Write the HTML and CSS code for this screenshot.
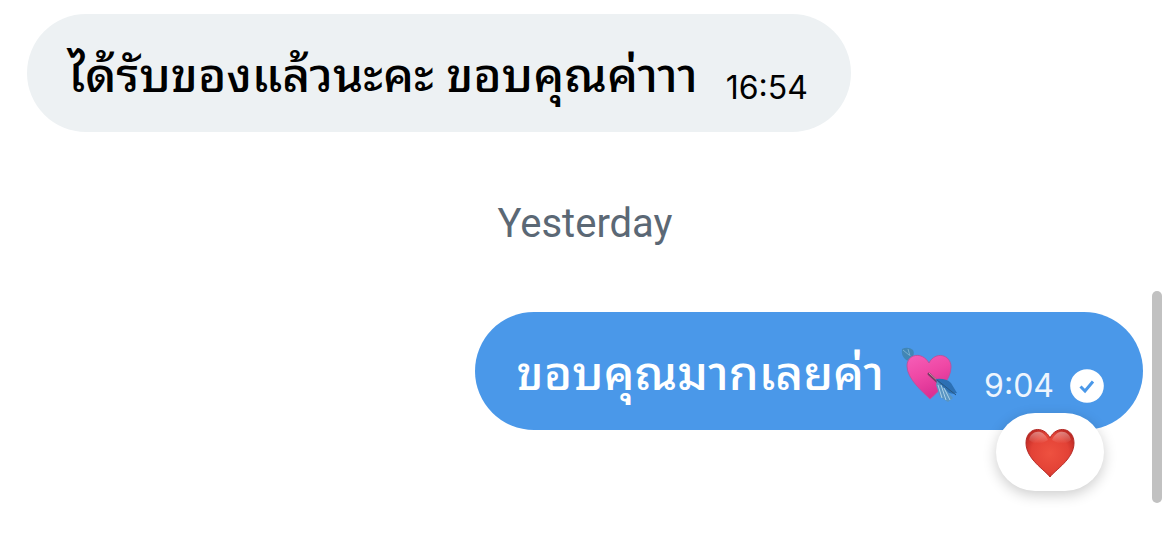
FILE: index.html
```html
<!DOCTYPE html>
<html lang="th">
<head>
    <meta charset="UTF-8">
    <meta name="viewport" content="width=device-width, initial-scale=1.0">
    <title>Messages</title>
    <link rel="stylesheet" href="styles.css">
</head>
<body>

<main class="chat">
    <div class="message received">
        <p class="text">ได้รับของแล้วนะคะ ขอบคุณค่าาา</p>
        <time class="time">16:54</time>
    </div>

    <div class="date" lang="en">Yesterday</div>

    <div class="message sent">
        <p class="text">ขอบคุณมากเลยค่า</p>
        <svg class="emoji" viewBox="0 0 60 60" role="img" aria-label="Heart with arrow">
            <defs>
                <linearGradient id="pink" x1="0" y1="0" x2="0.4" y2="1">
                    <stop offset="0" stop-color="#f65fb8"/>
                    <stop offset="0.5" stop-color="#ef48a5"/>
                    <stop offset="1" stop-color="#d92f93"/>
                </linearGradient>
            </defs>
            <path d="M9 10L17 19" stroke="#6b6170" stroke-width="2"/>
            <path d="M2 4Q8 1 13 5Q15 8 12 14Q8 17 5 14Q1 10 2 4Z" fill="#4186b5"/>
            <path d="M3 5L9 10M8 4L10 11" stroke="#78afd0" stroke-width="1"/>
            <path d="M30 54C23 47 7 34 7 21C7 9 22 6 29 18C35 6 51 9 51 22C51 35 38 47 30 54Z" fill="url(#pink)" stroke="#b6559f" stroke-width="1"/>
            <path d="M29 29L40 39" stroke="#783d64" stroke-width="3" stroke-linecap="round"/>
            <path d="M29 28L39 37" stroke="#c996a7" stroke-width="1"/>
            <path d="M36 34Q46 33 51 38Q54 43 57 48Q50 50 46 46L37 38Z" fill="#2c70b4"/>
            <path d="M37 36L36 40L40 52L48 57L53 53L47 46Z" fill="#5995c2"/>
            <path d="M38 40L42 53M41 40L46 55M44 43L50 55" stroke="#acd1e9" stroke-width="1"/>
            <path d="M37 35L56 50" stroke="#285780" stroke-width="1"/>
        </svg>
        <time class="time">9:04</time>
        <svg class="status" viewBox="0 0 34 34" role="img" aria-label="Delivered">
            <circle cx="17" cy="17" r="16.8" fill="#ffffff"/>
            <path d="M10.5 17.5L15 22L23 12.5" fill="none" stroke="#4a98e9" stroke-width="3"/>
        </svg>
        <button class="reaction" type="button" aria-label="Love">
            <svg class="heart" viewBox="0 0 52 52" aria-hidden="true">
                <defs>
                    <radialGradient id="red" cx="0.5" cy="0.5" r="0.6">
                        <stop offset="0" stop-color="#ee5140"/>
                        <stop offset="0.65" stop-color="#e34236"/>
                        <stop offset="1" stop-color="#b92722"/>
                    </radialGradient>
                    <linearGradient id="shine" x1="0" y1="0" x2="0" y2="1">
                        <stop offset="0" stop-color="#ffffff" stop-opacity="0.4"/>
                        <stop offset="1" stop-color="#ffffff" stop-opacity="0"/>
                    </linearGradient>
                </defs>
                <path d="M26 51C21 44 2 33 2 17C2 1 20-1 26 12C32-1 50 1 50 17C50 33 31 44 26 51Z" fill="url(#red)" stroke="#b52b27" stroke-width="1"/>
                <path d="M5 14C7 4 19 2 24 14Q13 21 5 14ZM28 14C33 2 45 4 47 14Q39 21 28 14Z" fill="url(#shine)"/>
            </svg>
        </button>
    </div>
</main>
<div class="scrollbar"></div>

</body>
</html>
```
FILE: styles.css
```css
body {
    margin: 0;
    background-color: #ffffff;
    font-family: Inter, sans-serif;
}

.chat {
    display: flex;
    flex-direction: column;
    box-sizing: border-box;
    min-height: 100vh;
    padding: 14px 27px 40px;
}

.message {
    display: flex;
    align-items: center;
    box-sizing: border-box;
    min-height: 118px;
    padding: 0 39px 0 41px;
    border-radius: 60px;
}

.received {
    align-self: flex-start;
    padding-right: 43px;
    background-color: #edf1f3;
    color: #000000;
}

.sent {
    position: relative;
    align-self: flex-end;
    background-color: #4a98e9;
    color: #ffffff;
}

.text {
    margin: 0 0 4px;
    font-family: "Noto Sans Thai Looped", "Noto Looped Thai", Loma, Laksaman, Garuda, Waree, "Droid Sans Thai", Thonburi, sans-serif;
    font-size: 48px;
    font-weight: 500;
    line-height: 64px;
    white-space: nowrap;
}

.time {
    margin-top: 30px;
    margin-left: 24px;
    font-size: 32px;
    line-height: 40px;
}

.received .time {
    margin-left: 28px;
}

.sent .time {
    color: #eef5fd;
}

.date {
    margin: 66px 0 62px;
    color: #5b6875;
    font-family: Roboto, sans-serif;
    font-size: 40px;
    line-height: 52px;
    text-align: center;
}

.emoji {
    width: 60px;
    height: 60px;
    margin-top: 8px;
    margin-left: 16px;
}

.status {
    width: 34px;
    height: 34px;
    margin-top: 30px;
    margin-left: 16px;
}

/* Reaction sits over the bottom edge of the bubble */
.reaction {
    position: absolute;
    right: 39px;
    bottom: -61px;
    display: flex;
    justify-content: center;
    align-items: center;
    width: 108px;
    height: 78px;
    padding: 0;
    border: 0;
    border-radius: 39px;
    background-color: #ffffff;
    box-shadow: 0 4px 14px rgba(0, 0, 0, 0.2);
    cursor: pointer;
}

.heart {
    width: 52px;
    height: 52px;
}

.scrollbar {
    position: fixed;
    right: 8px;
    bottom: 30px;
    width: 10px;
    height: 212px;
    border-radius: 5px;
    background-color: #c1c1c1;
}
```
